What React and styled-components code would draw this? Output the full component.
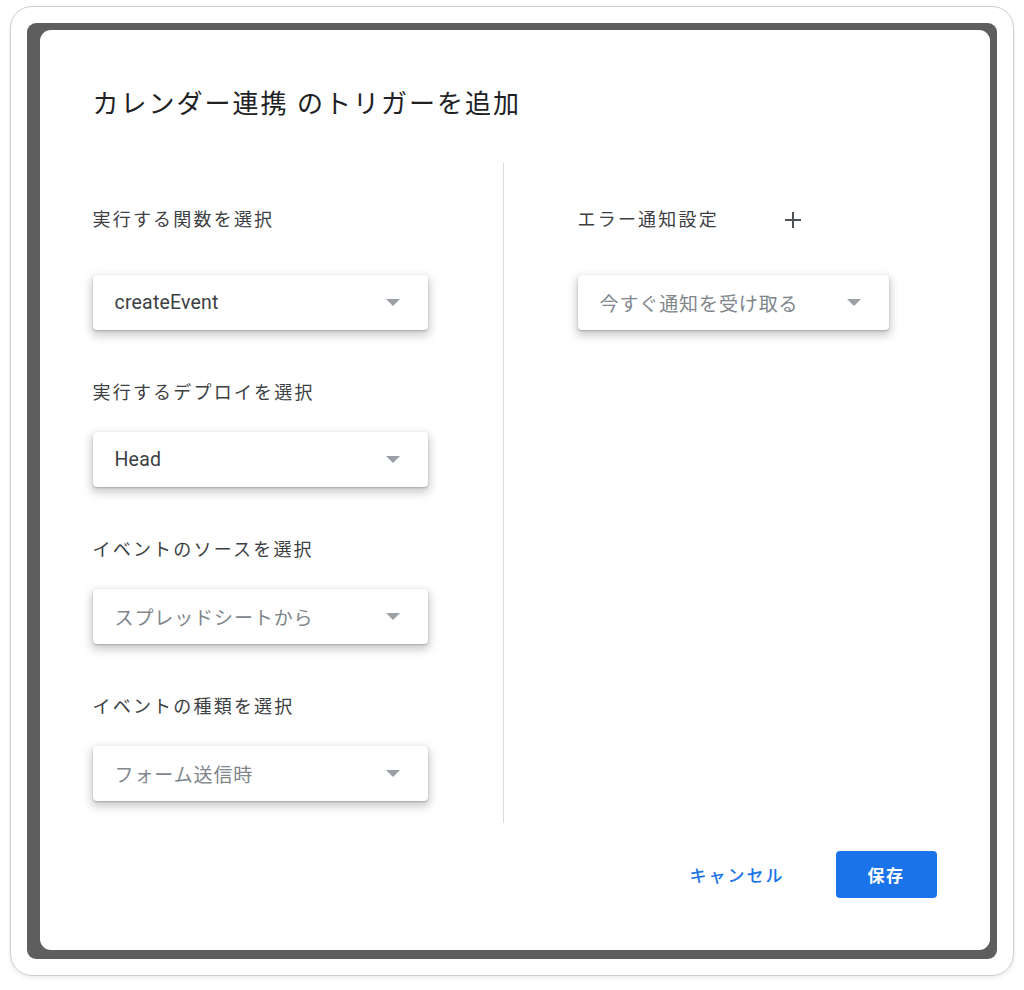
import React from "react";
import styled, { createGlobalStyle } from "styled-components";

const Global = createGlobalStyle`
  html, body { margin: 0; padding: 0; background: #ffffff; }
  body {
    font-family: Roboto, "Noto Sans CJK JP", "Noto Sans", sans-serif;
    -webkit-font-smoothing: antialiased;
  }
  * { box-sizing: border-box; }
`;

const Page = styled.div`
  padding: 6px 10px 0 10px;
  width: 1024px;
  height: 990px;
`;

const Card = styled.div`
  width: 1004px;
  height: 970px;
  border: 1.5px solid #cfcfcf;
  border-radius: 22px;
  background: #ffffff;
  box-shadow: 0 2px 4px rgba(0, 0, 0, 0.08);
  padding: 15.5px 15px 15px 15.5px;
`;

const Backdrop = styled.div`
  width: 970px;
  height: 936px;
  background: #5e5e5e;
  border-radius: 9px;
  padding: 7px 7px 9px 13px;
`;

const Dialog = styled.div`
  width: 950px;
  height: 920px;
  background: #ffffff;
  border-radius: 11px;
  padding: 0 53px;
  display: flex;
  flex-direction: column;
`;

const Title = styled.h1`
  margin: 0;
  padding-top: 58px;
  font-size: 26px;
  line-height: 32px;
  font-weight: 400;
  letter-spacing: 2px;
  color: #202124;
`;

const Body = styled.div`
  margin-top: 43px;
  display: flex;
  height: 660px;
`;

const Column = styled.div`
  display: flex;
  flex-direction: column;
  padding-top: 33px;
  ${(p) => (p.$divider ? "border-right: 1px solid #dadce0;" : "")}
  width: ${(p) => p.$width}px;
  padding-left: ${(p) => p.$inset || 0}px;
`;

const Field = styled.div`
  display: flex;
  flex-direction: column;
  margin-bottom: 51.3px;
`;

const LabelRow = styled.div`
  display: flex;
  align-items: center;
  height: ${(p) => (p.$header ? 48 : 24)}px;
  margin-bottom: ${(p) => (p.$header ? 31 : 27)}px;
`;

const Label = styled.span`
  font-size: 18px;
  line-height: 24px;
  letter-spacing: 2.2px;
  color: #3c4043;
`;

const IconButton = styled.button`
  width: 48px;
  height: 48px;
  margin-left: 50px;
  border: none;
  background: transparent;
  padding: 0;
  display: flex;
  align-items: center;
  justify-content: center;
  color: #4d5156;
  cursor: pointer;
`;

const Select = styled.div`
  width: ${(p) => p.$width}px;
  height: 55px;
  border-radius: 4px;
  background: #ffffff;
  box-shadow: 0 1px 2px rgba(60, 64, 67, 0.3), 0 4px 8px 2px rgba(60, 64, 67, 0.25);
  display: flex;
  align-items: center;
  padding-left: 22px;
  padding-right: 28px;
`;

const SelectText = styled.span`
  flex: 1;
  font-size: ${(p) => (p.$muted ? 19 : 19.5)}px;
  letter-spacing: ${(p) => (p.$muted ? "0.9px" : "0.2px")};
  color: ${(p) => (p.$muted ? "#80868b" : "#3c4043")};
`;

const Caret = styled.span`
  width: 0;
  height: 0;
  border-left: 7.5px solid transparent;
  border-right: 7.5px solid transparent;
  border-top: 7.5px solid #9aa0a6;
`;

const Footer = styled.div`
  margin-top: 28px;
  display: flex;
  justify-content: flex-end;
  align-items: center;
`;

const TextButton = styled.button`
  border: none;
  background: transparent;
  font-family: inherit;
  font-size: 17px;
  font-weight: 500;
  letter-spacing: 2px;
  color: #1a73e8;
  padding: 0 24px;
  height: 47px;
  margin-right: 27px;
  cursor: pointer;
`;

const PrimaryButton = styled.button`
  width: 101px;
  height: 47px;
  border: none;
  border-radius: 4px;
  background: #1a73e8;
  color: #ffffff;
  font-family: inherit;
  font-size: 17px;
  font-weight: 700;
  letter-spacing: 1.6px;
  cursor: pointer;
`;

function Dropdown({ value, muted, width = 335 }) {
  return (
    <Select $width={width}>
      <SelectText $muted={muted}>{value}</SelectText>
      <Caret />
    </Select>
  );
}

function PlusIcon() {
  return (
    <svg width="18" height="18" viewBox="0 0 18 18" fill="none">
      <path d="M9 1v16M1 9h16" stroke="currentColor" strokeWidth="2" />
    </svg>
  );
}

export default function App() {
  const left = [
    { label: "実行する関数を選択", value: "createEvent", header: true },
    { label: "実行するデプロイを選択", value: "Head" },
    { label: "イベントのソースを選択", value: "スプレッドシートから", muted: true },
    { label: "イベントの種類を選択", value: "フォーム送信時", muted: true },
  ];
  return (
    <>
      <Global />
      <Page>
        <Card>
          <Backdrop>
            <Dialog>
              <Title>カレンダー連携 のトリガーを追加</Title>
              <Body>
                <Column $divider $width={411}>
                  {left.map((f) => (
                    <Field key={f.label}>
                      <LabelRow $header={f.header}>
                        <Label>{f.label}</Label>
                      </LabelRow>
                      <Dropdown value={f.value} muted={f.muted} />
                    </Field>
                  ))}
                </Column>
                <Column $width={430} $inset={74}>
                  <Field>
                    <LabelRow $header>
                      <Label>エラー通知設定</Label>
                      <IconButton aria-label="追加">
                        <PlusIcon />
                      </IconButton>
                    </LabelRow>
                    <Dropdown value="今すぐ通知を受け取る" muted width={311} />
                  </Field>
                </Column>
              </Body>
              <Footer>
                <TextButton>キャンセル</TextButton>
                <PrimaryButton>保存</PrimaryButton>
              </Footer>
            </Dialog>
          </Backdrop>
        </Card>
      </Page>
    </>
  );
}
